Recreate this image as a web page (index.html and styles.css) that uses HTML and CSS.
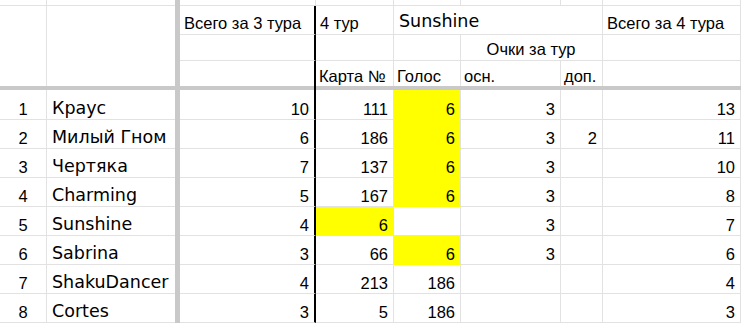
FILE: index.html
```html
<!DOCTYPE html>
<html lang="ru">
<head>
<meta charset="utf-8">
<title>Sunshine</title>
<link rel="stylesheet" href="styles.css">
</head>
<body>
<div class="sheet">
  <div class="vbar"></div>
  <div class="hbar hbar-left"></div>
  <div class="hbar hbar-right"></div>

  <!-- top partial row -->
  <div class="c top"></div>
  <div class="c top nob"></div>
  <div class="c top"></div>
  <div class="c top"></div>
  <div class="c top"></div>
  <div class="c top"></div>
  <div class="c top"></div>
  <div class="c top"></div>

  <!-- header row 1 -->
  <div class="c span-r3 last"></div>
  <div class="c span-r3 last nob"></div>
  <div class="c h1 black">Всего за 3 тура</div>
  <div class="c h1">4 тур</div>
  <div class="c h1 span-c3 name big">Sunshine</div>
  <div class="c h1">Всего за 4 тура</div>
  <!-- header row 2 -->
  <div class="c black"></div>
  <div class="c"></div>
  <div class="c"></div>
  <div class="c h2 span-c2 center">Очки за тур</div>
  <div class="c"></div>
  <!-- header row 3 -->
  <div class="c h3 last black"></div>
  <div class="c h3 last">Карта №</div>
  <div class="c h3 last">Голос</div>
  <div class="c h3 last">осн.</div>
  <div class="c h3 last">доп.</div>
  <div class="c h3 last"></div>

  <!-- data -->
  <div class="c num center">1</div><div class="c name nob">Краус</div>
  <div class="c num black">10</div><div class="c num">111</div><div class="c num y">6</div><div class="c num">3</div><div class="c num"></div><div class="c num">13</div>

  <div class="c num center">2</div><div class="c name nob">Милый Гном</div>
  <div class="c num black">6</div><div class="c num">186</div><div class="c num y">6</div><div class="c num">3</div><div class="c num">2</div><div class="c num">11</div>

  <div class="c num center">3</div><div class="c name nob">Чертяка</div>
  <div class="c num black">7</div><div class="c num">137</div><div class="c num y">6</div><div class="c num">3</div><div class="c num"></div><div class="c num">10</div>

  <div class="c num center">4</div><div class="c name nob">Charming</div>
  <div class="c num black">5</div><div class="c num">167</div><div class="c num y">6</div><div class="c num">3</div><div class="c num"></div><div class="c num">8</div>

  <div class="c num center">5</div><div class="c name nob">Sunshine</div>
  <div class="c num black">4</div><div class="c num y">6</div><div class="c num"></div><div class="c num">3</div><div class="c num"></div><div class="c num">7</div>

  <div class="c num center">6</div><div class="c name nob">Sabrina</div>
  <div class="c num black">3</div><div class="c num">66</div><div class="c num y">6</div><div class="c num">3</div><div class="c num"></div><div class="c num">6</div>

  <div class="c num center">7</div><div class="c name nob">ShakuDancer</div>
  <div class="c num black">4</div><div class="c num">213</div><div class="c num">186</div><div class="c num"></div><div class="c num"></div><div class="c num">4</div>

  <div class="c num center">8</div><div class="c name nob">Cortes</div>
  <div class="c num black">3</div><div class="c num">5</div><div class="c num">186</div><div class="c num"></div><div class="c num"></div><div class="c num">3</div>
</div>
</body>
</html>
```
FILE: styles.css
```css
html, body {
  margin: 0;
  padding: 0;
  background: #ffffff;
}

.sheet {
  display: grid;
  grid-template-columns: 47px 128px 5px 136px 78px 67px 100px 42px 138px;
  grid-template-rows: 6px 29px 26px 25px 4px 30px repeat(7, 29px);
  font-family: "Liberation Sans", Arial, sans-serif;
  font-size: 16.5px;
  color: #000;
  width: 741px;
}

.vbar {
  grid-column: 3;
  grid-row: 1 / -1;
  background: #c9c9c9;
  z-index: 1;
}

.hbar {
  grid-row: 5;
  background: #c9c9c9;
  z-index: 1;
}

.hbar-left {
  grid-column: 1 / 5;
  border-right: 2px solid #000;
}

.hbar-right {
  grid-column: 5 / 10;
}

.c {
  box-sizing: border-box;
  border-right: 1px solid #e2e2e2;
  border-bottom: 1px solid #e2e2e2;
  display: flex;
  align-items: flex-end;
  padding: 0 5px 1px 4px;
  line-height: 18px;
  white-space: nowrap;
  overflow: hidden;
}

.top {
  padding: 0;
}

.nob {
  border-right: none;
}

.black {
  border-right: 2px solid #000;
}

.top.black {
  border-right-color: #e2e2e2;
}

.span-r3 {
  grid-row: span 3;
}

.span-c3 {
  grid-column: span 3;
}

.span-c2 {
  grid-column: span 2;
}

.last {
  border-bottom: none;
}

.h1 {
  padding-bottom: 2px;
}

.h2 {
  padding-bottom: 2px;
}

.h3 {
  padding-left: 3px;
  padding-bottom: 1px;
}

.center {
  justify-content: center;
}

.num {
  justify-content: flex-end;
}

.num.center {
  justify-content: center;
  padding: 0 0 1px 0;
}

.name {
  font-family: "DejaVu Sans", Verdana, sans-serif;
  font-size: 17.5px;
  line-height: 20px;
  padding-left: 5px;
  padding-bottom: 1px;
}

.h1.name {
  padding-left: 5px;
  padding-bottom: 3px;
}

.y {
  background: #ffff00;
  border-bottom-color: #ffff00;
}
```
